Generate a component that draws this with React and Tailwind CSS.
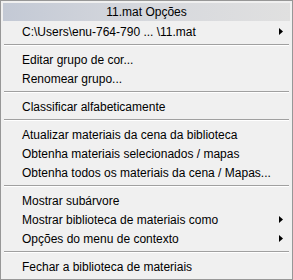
const groups = [
  [{ label: "C:\\Users\\enu-764-790 ... \\11.mat", sub: true }],
  [{ label: "Editar grupo de cor..." }, { label: "Renomear grupo..." }],
  [{ label: "Classificar alfabeticamente" }],
  [
    { label: "Atualizar materiais da cena da biblioteca" },
    { label: "Obtenha materiais selecionados / mapas" },
    { label: "Obtenha todos os materiais da cena / Mapas..." }
  ],
  [
    { label: "Mostrar subárvore" },
    { label: "Mostrar biblioteca de materiais como", sub: true },
    { label: "Opções do menu de contexto", sub: true }
  ],
  [{ label: "Fechar a biblioteca de materiais" }]
]

function Arrow() {
  return (
    <svg width="4" height="7" viewBox="0 0 4 7" className="block">
      <path d="M0 0 L4 3.5 L0 7 Z" fill="#000" />
    </svg>
  )
}

export default function App() {
  return (
    <div
      className="w-[293px] h-[280px] bg-[#f0f0f0] border border-[#979797] p-[2px] text-[12px] text-black overflow-hidden"
      style={{ fontFamily: '"Liberation Sans", Tahoma, sans-serif' }}
    >
      {/* TITLE */}
      <div className="h-[18px] flex items-center justify-center bg-gradient-to-r from-[#c3c9d5] via-[#d6d8dd] to-[#e0e0e0]">
        11.mat Opções
      </div>

      <div className="mt-[1px]">
        {groups.map((g, gi) => (
          <div key={gi}>
            {gi > 0 && (
              <div className="h-[9px] pt-[3px] px-[1px]">
                <div className="h-[1px] bg-[#a0a0a0]" />
                <div className="h-[1px] bg-white" />
              </div>
            )}
            {g.map((it, i) => (
              <div key={i} className="h-[19px] flex items-center pl-[19px] pr-[7px]">
                <span className="flex-1 whitespace-nowrap">{it.label}</span>
                {it.sub && <Arrow />}
              </div>
            ))}
          </div>
        ))}
      </div>
    </div>
  )
}
